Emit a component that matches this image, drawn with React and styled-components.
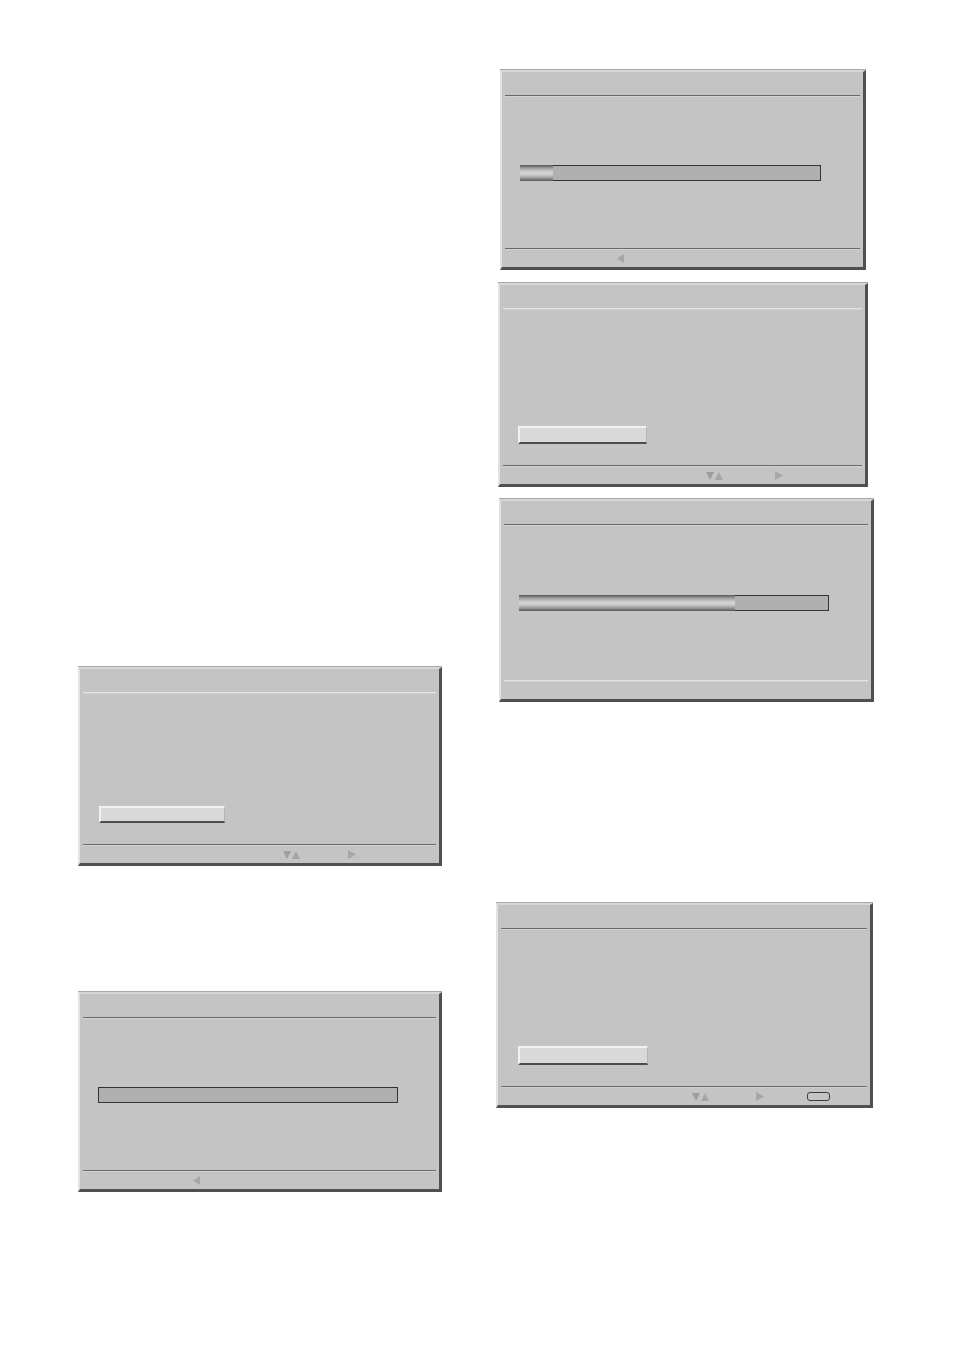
import React from "react";
import styled, { createGlobalStyle } from "styled-components";

const GlobalStyle = createGlobalStyle`
    html, body {
        margin: 0;
        padding: 0;
        background: #ffffff;
        font-family: "Liberation Sans", Arial, sans-serif;
    }
`;

const Page = styled.div`
    width: 954px;
    height: 1350px;
    display: flex;
    overflow: hidden;
`;

const Column = styled.div`
    display: flex;
    flex-direction: column;
    width: ${(props) => props.$width}px;
    padding-left: ${(props) => props.$left}px;
    box-sizing: border-box;
`;

const Panel = styled.div`
    width: ${(props) => props.$w}px;
    height: ${(props) => props.$h}px;
    margin-top: ${(props) => props.$top}px;
    margin-left: ${(props) => props.$shift || 0}px;
    box-sizing: border-box;
    background: #c4c4c4;
    border-top: 2px solid #d6d6d6;
    border-left: 2px solid #e2e2e2;
    border-right: 3px solid #505050;
    border-bottom: 3px solid #505050;
    box-shadow: 0 -1px 0 #a8a8a8;
    display: flex;
    flex-direction: column;
`;

const Title = styled.div`
    height: 23px;
    flex-shrink: 0;
`;

const Rule = styled.div`
    height: 2px;
    margin: 0 3px;
    flex-shrink: 0;
    box-sizing: border-box;
    border-top: 1px solid ${(props) => (props.$light ? "#e4e4e4" : "#6a6a6a")};
    border-bottom: 1px solid ${(props) => (props.$light ? "#cfcfcf" : "#d2d2d2")};
`;

const Body = styled.div`
    flex: 1;
    display: flex;
    align-items: ${(props) => (props.$bottom ? "flex-end" : "center")};
    padding: 0 0 ${(props) => (props.$bottom ? 21 : 0)}px 18px;
`;

const Bar = styled.div`
    width: ${(props) => props.$w}px;
    height: 16px;
    box-sizing: border-box;
    border: 1px solid #333333;
    background: #b0b0b0;
    display: flex;
`;

const Fill = styled.div`
    width: ${(props) => props.$w}px;
    height: 16px;
    margin: -1px 0 0 -1px;
    background: linear-gradient(
        to bottom,
        #555555 0%,
        #8c8c8c 14%,
        #bdbdbd 32%,
        #d6d6d6 50%,
        #c2c2c2 66%,
        #8a8a8a 86%,
        #555555 100%
    );
`;

const Button = styled.div`
    width: ${(props) => props.$w}px;
    height: ${(props) => props.$h}px;
    margin-left: ${(props) => props.$shift || 0}px;
    box-sizing: border-box;
    background: #d9d9d9;
    border-top: 2px solid #f2f2f2;
    border-left: 2px solid #f2f2f2;
    border-right: 1px solid #b4b4b4;
    border-bottom: 2px solid #4c4c4c;
`;

const Footer = styled.div`
    height: 17px;
    flex-shrink: 0;
    display: flex;
    align-items: center;
`;

const Hint = styled.span`
    display: inline-flex;
    margin-left: ${(props) => props.$at}px;
    color: #a6a6a6;
`;

const OkKey = styled.span`
    display: inline-block;
    margin-left: ${(props) => props.$at}px;
    width: 23px;
    height: 9px;
    box-sizing: border-box;
    border: 1px solid #3c3c3c;
    border-radius: 3px;
    background: #c4c4c4;
`;

const LeftArrow = () => (
    <svg width="7" height="9" viewBox="0 0 7 9">
        <polygon points="7,0 7,9 0,4.5" fill="#a6a6a6" />
    </svg>
);

const RightArrow = () => (
    <svg width="8" height="9" viewBox="0 0 8 9">
        <polygon points="0,0 0,9 8,4.5" fill="#a6a6a6" />
    </svg>
);

const UpDown = () => (
    <svg width="17" height="8" viewBox="0 0 17 8">
        <polygon points="0,0 8,0 4,8" fill="#9e9e9e" />
        <polygon points="9,8 17,8 13,0" fill="#a6a6a6" />
    </svg>
);

const App = () => {
    return (
        <>
            <GlobalStyle />
            <Page>
                <Column $width={496} $left={78}>
                    <Panel $w={364} $h={199} $top={667}>
                        <Title />
                        <Rule $light />
                        <Body $bottom>
                            <Button $w={126} $h={17} $shift={1} />
                        </Body>
                        <Rule />
                        <Footer>
                            <Hint $at={203}>
                                <UpDown />
                            </Hint>
                            <Hint $at={48}>
                                <RightArrow />
                            </Hint>
                        </Footer>
                    </Panel>
                    <Panel $w={364} $h={200} $top={126}>
                        <Title />
                        <Rule />
                        <Body>
                            <Bar $w={300} />
                        </Body>
                        <Rule />
                        <Footer>
                            <Hint $at={113}>
                                <LeftArrow />
                            </Hint>
                        </Footer>
                    </Panel>
                </Column>
                <Column $width={458} $left={0}>
                    <Panel $w={366} $h={200} $top={70} $shift={4}>
                        <Title />
                        <Rule />
                        <Body>
                            <Bar $w={301}>
                                <Fill $w={33} />
                            </Bar>
                        </Body>
                        <Rule />
                        <Footer>
                            <Hint $at={115}>
                                <LeftArrow />
                            </Hint>
                        </Footer>
                    </Panel>
                    <Panel $w={370} $h={204} $top={13} $shift={2}>
                        <Title />
                        <Rule $light />
                        <Body $bottom>
                            <Button $w={129} $h={18} />
                        </Body>
                        <Rule />
                        <Footer>
                            <Hint $at={206}>
                                <UpDown />
                            </Hint>
                            <Hint $at={52}>
                                <RightArrow />
                            </Hint>
                        </Footer>
                    </Panel>
                    <Panel $w={375} $h={203} $top={12} $shift={3}>
                        <Title />
                        <Rule />
                        <Body>
                            <Bar $w={310}>
                                <Fill $w={216} />
                            </Bar>
                        </Body>
                        <Rule $light />
                        <Footer />
                    </Panel>
                    <Panel $w={377} $h={205} $top={201}>
                        <Title />
                        <Rule />
                        <Body $bottom>
                            <Button $w={130} $h={19} $shift={2} />
                        </Body>
                        <Rule />
                        <Footer>
                            <Hint $at={194}>
                                <UpDown />
                            </Hint>
                            <Hint $at={47}>
                                <RightArrow />
                            </Hint>
                            <OkKey $at={43} />
                        </Footer>
                    </Panel>
                </Column>
            </Page>
        </>
    );
};

export default App;
